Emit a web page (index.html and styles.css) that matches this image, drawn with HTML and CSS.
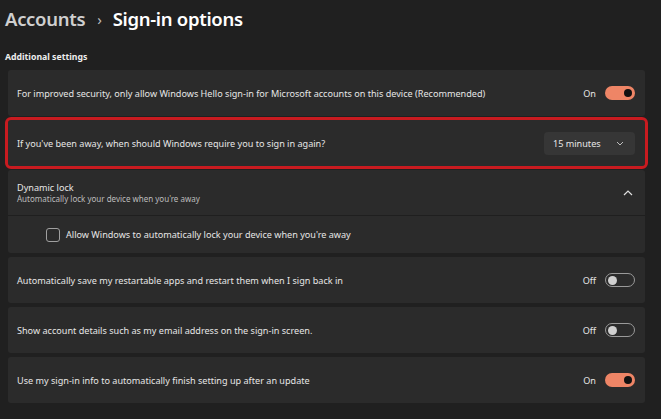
FILE: index.html
```html
<!DOCTYPE html>
<html>
<head>
<meta charset="utf-8">
<link rel="stylesheet" href="styles.css">
</head>
<body>
<div class="page">
  <h1 class="title"><span class="crumb">Accounts</span><span class="sep">›</span><span class="current">Sign-in options</span></h1>
  <div class="section">Additional settings</div>
  <div class="list">
    <div class="card row">
      <span class="label">For improved security, only allow Windows Hello sign-in for Microsoft accounts on this device (Recommended)</span>
      <div class="ctrl"><span class="state">On</span><span class="toggle on"><span class="knob"></span></span></div>
    </div>
    <div class="card row highlight">
      <span class="label">If you've been away, when should Windows require you to sign in again?</span>
      <div class="dropdown"><span>15 minutes</span>
        <svg class="chev" width="8" height="5" viewBox="0 0 8 5"><path d="M1 1 L4 4 L7 1" fill="none" stroke="#bdbdbd" stroke-width="1"/></svg>
      </div>
    </div>
    <div class="card expander">
      <div class="row head">
        <div class="stack">
          <span class="label">Dynamic lock</span>
          <span class="sub">Automatically lock your device when you're away</span>
        </div>
        <svg class="chev-up" width="10" height="6" viewBox="0 0 10 6"><path d="M1 5 L5 1 L9 5" fill="none" stroke="#e0e0e0" stroke-width="1.2"/></svg>
      </div>
      <div class="row body">
        <span class="check"></span>
        <span class="label">Allow Windows to automatically lock your device when you're away</span>
      </div>
    </div>
    <div class="card row">
      <span class="label">Automatically save my restartable apps and restart them when I sign back in</span>
      <div class="ctrl"><span class="state">Off</span><span class="toggle off"><span class="knob"></span></span></div>
    </div>
    <div class="card row">
      <span class="label">Show account details such as my email address on the sign-in screen.</span>
      <div class="ctrl"><span class="state">Off</span><span class="toggle off"><span class="knob"></span></span></div>
    </div>
    <div class="card row">
      <span class="label">Use my sign-in info to automatically finish setting up after an update</span>
      <div class="ctrl"><span class="state">On</span><span class="toggle on"><span class="knob"></span></span></div>
    </div>
  </div>
</div>
</body>
</html>
```
FILE: styles.css
```css
html, body {
  margin: 0;
  padding: 0;
  background: #202020;
}
body {
  font-family: "Noto Sans", "Open Sans", sans-serif;
  color: #e8e8e8;
  width: 661px;
  height: 419px;
  overflow: hidden;
}
.page {
  padding: 0 16px 0 8px;
}
.title {
  margin: 4px 0 0 -3px;
  font-size: 18.5px;
  letter-spacing: -0.3px;
  font-weight: 600;
  line-height: 30px;
  display: flex;
  align-items: center;
}
.crumb { color: #cfcfcf; }
.sep { color: #bdbdbd; font-size: 15px; margin: 0 11px 0 12px; font-weight: 400; }
.current { color: #ffffff; }
.section {
  margin: 17px 0 0 -3px;
  font-size: 8.7px;
  font-weight: 700;
  line-height: 12px;
  color: #eeeeee;
}
.list {
  margin-top: 7px;
  display: flex;
  flex-direction: column;
  gap: 4px;
}
.card {
  background: #2b2b2b;
  border-radius: 3px;
}
.row {
  display: flex;
  align-items: center;
  justify-content: space-between;
  min-height: 46px;
  padding: 0 10px 0 9px;
  box-sizing: border-box;
}
.label {
  font-size: 9.1px;
  color: #e6e6e6;
}
.highlight {
  outline: 3px solid #c81b20;
}
.ctrl {
  display: flex;
  align-items: center;
  gap: 9px;
}
.state {
  font-size: 9.1px;
  color: #e6e6e6;
}
.toggle {
  width: 30px;
  height: 14px;
  border-radius: 7px;
  box-sizing: border-box;
  display: flex;
  align-items: center;
  padding: 0 3px;
}
.toggle.on {
  background: #ee8566;
  justify-content: flex-end;
}
.toggle.off {
  border: 1px solid #9a9a9a;
  justify-content: flex-start;
  padding: 0 2px;
}
.knob {
  width: 8px;
  height: 8px;
  border-radius: 50%;
}
.on .knob { background: #111111; }
.off .knob { background: #d0d0d0; width: 9px; height: 9px; }
.dropdown {
  width: 91px;
  height: 23px;
  background: #363636;
  border-radius: 4px;
  display: flex;
  align-items: center;
  justify-content: space-between;
  padding: 0 11px 0 9px;
  box-sizing: border-box;
  font-size: 9.1px;
  color: #e6e6e6;
}
.expander .head {
  border-bottom: 1px solid #1f1f1f;
}
.stack {
  display: flex;
  flex-direction: column;
}
.stack .label { line-height: 13px; }
.sub {
  font-size: 8px;
  color: #bdbdbd;
  line-height: 10px;
}
.chev-up { margin-right: 2px; }
.expander .body {
  min-height: 37px;
  justify-content: flex-start;
  padding-left: 38px;
  gap: 6px;
}
.check {
  width: 14px;
  height: 14px;
  border: 1px solid #a0a0a0;
  border-radius: 3px;
  box-sizing: border-box;
}
```
